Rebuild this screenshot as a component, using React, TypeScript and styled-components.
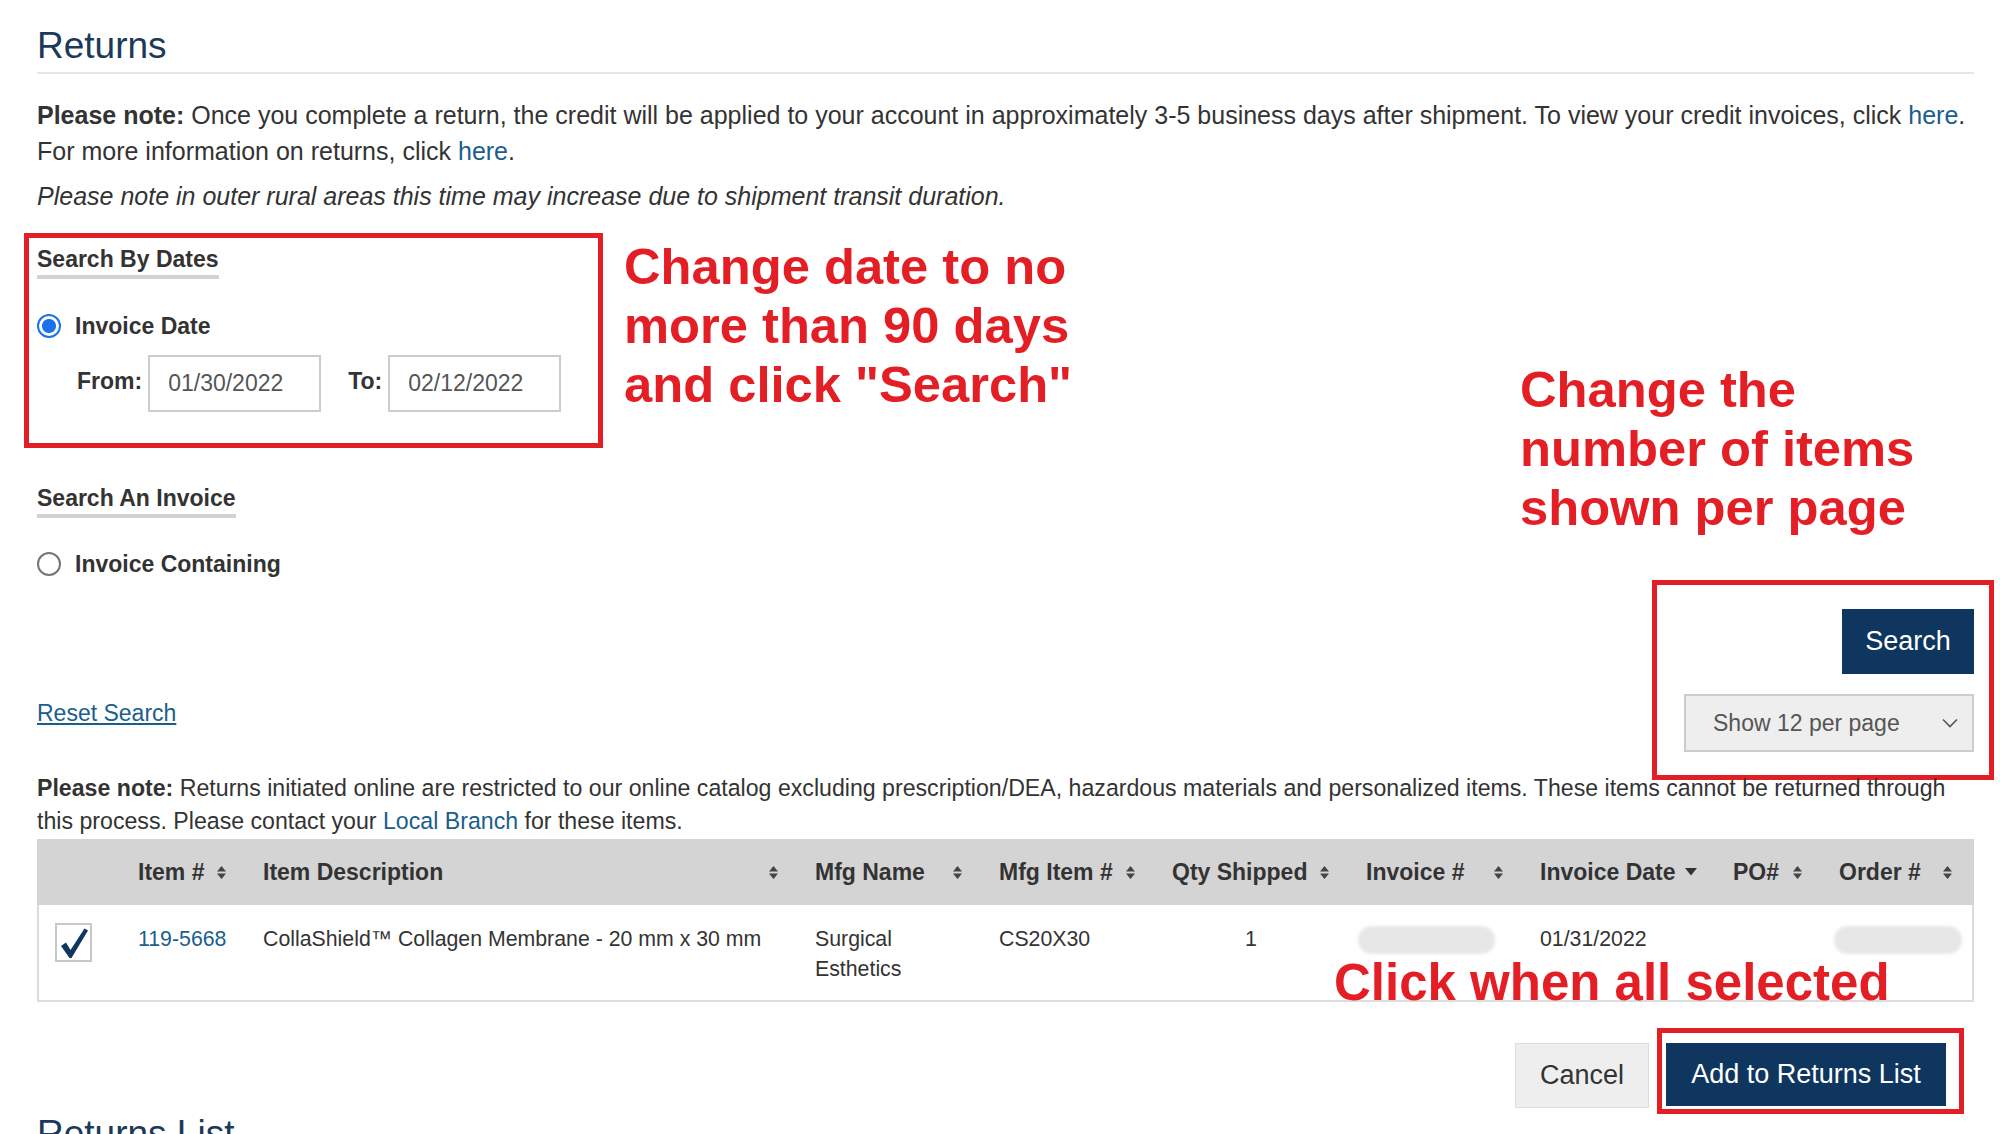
import React from 'react'
import styled, { createGlobalStyle } from 'styled-components'

const GlobalStyle = createGlobalStyle`
  html, body {
    margin: 0;
    padding: 0;
    background: #ffffff;
  }
  body {
    font-family: 'Liberation Sans', Arial, sans-serif;
    color: #333333;
    overflow: hidden;
  }
`

const NAVY = '#0f365f'
const RED = '#e31e25'
const LINK = '#1b5e8c'

const Page = styled.main`
  width: 2000px;
  height: 1134px;
  box-sizing: border-box;
  padding: 26px 26px 0 37px;
  overflow: hidden;
`

const Title = styled.h1`
  margin: 0;
  font-size: 37px;
  line-height: 40px;
  font-weight: 400;
  color: #1b3a5a;
`

const Rule = styled.div`
  margin-top: 6px;
  height: 2px;
  background: #e6e6e6;
`

const Note = styled.p<{ $size?: number; $lh?: number; $italic?: boolean }>`
  margin: 0;
  font-size: ${p => p.$size ?? 25}px;
  line-height: ${p => p.$lh ?? 36}px;
  font-style: ${p => (p.$italic ? 'italic' : 'normal')};
  color: #333333;

  b {
    font-weight: 700;
  }
`

const Lead = styled(Note)`
  margin-top: 23px;
`

const Italic = styled(Note)`
  margin-top: 9px;
`

const A = styled.a`
  color: ${LINK};
  text-decoration: none;
`

const SearchArea = styled.section`
  margin-top: 19px;
  display: flex;
  justify-content: space-between;
  align-items: flex-start;
`

const LeftCol = styled.div`
  display: flex;
  flex-direction: column;
  align-items: flex-start;
`

const DateRow = styled.div`
  display: flex;
  align-items: flex-start;
  margin-left: -13px;
`

const RedFrame = styled.div`
  border: 5px solid ${RED};
  box-sizing: border-box;
`

const DateBox = styled(RedFrame)`
  width: 579px;
  padding: 8px 0 31px 8px;
  display: flex;
  flex-direction: column;
  align-items: flex-start;
`

const SectionHeading = styled.div<{ $top?: number }>`
  margin-top: ${p => p.$top ?? 0}px;
  display: inline-block;
  font-size: 23px;
  line-height: 26px;
  font-weight: 700;
  padding-bottom: 3px;
  border-bottom: 4px solid #d2d2d2;
`

const RadioRow = styled.label<{ $top: number }>`
  margin-top: ${p => p.$top}px;
  display: flex;
  align-items: center;
  gap: 14px;
  font-size: 23px;
  line-height: 26px;
  font-weight: 700;
`

const Radio = styled.span<{ $on?: boolean }>`
  width: 24px;
  height: 24px;
  box-sizing: border-box;
  border-radius: 50%;
  border: 2px solid ${p => (p.$on ? '#1a73e8' : '#767676')};
  background: ${p => (p.$on ? 'radial-gradient(circle, #1a73e8 0 6.5px, #ffffff 7.5px)' : '#ffffff')};
`

const DateFields = styled.div`
  margin-top: 16px;
  padding-left: 40px;
  display: flex;
  align-items: center;
  font-size: 23px;
`

const FieldLabel = styled.span<{ $gap?: number }>`
  font-weight: 700;
  margin-left: ${p => p.$gap ?? 0}px;
  margin-right: 6px;
  margin-top: -4px;
`

const DateInput = styled.div`
  width: 173px;
  height: 57px;
  box-sizing: border-box;
  border: 2px solid #cccccc;
  padding-left: 18px;
  display: flex;
  align-items: center;
  color: #555555;
  font-size: 23px;
`

const Callout = styled.div<{ $top?: number; $left?: number }>`
  margin-top: ${p => p.$top ?? 0}px;
  margin-left: ${p => p.$left ?? 0}px;
  color: ${RED};
  font-weight: 700;
  font-size: 50.7px;
  line-height: 59px;
  white-space: nowrap;
`

const ResetLink = styled.a`
  margin-top: 123px;
  color: ${LINK};
  font-size: 23px;
  line-height: 26px;
  text-decoration: underline;
`

const RightCol = styled.div`
  width: 454px;
  display: flex;
  flex-direction: column;
`

const PagerBox = styled(RedFrame)`
  align-self: flex-end;
  width: 342px;
  margin-top: 43px;
  margin-right: -20px;
  margin-bottom: -8px;
  padding: 24px 15px 23px 27px;
  display: flex;
  flex-direction: column;
  align-items: flex-end;
  gap: 20px;
`

const NavyButton = styled.button<{ $w: number; $h: number }>`
  width: ${p => p.$w}px;
  height: ${p => p.$h}px;
  border: none;
  background: ${NAVY};
  color: #ffffff;
  font-family: inherit;
  font-size: 27px;
  padding: 0;
`

const GreyButton = styled.button`
  margin-top: 15px;
  width: 134px;
  height: 65px;
  box-sizing: border-box;
  border: 1px solid #dddddd;
  background: #eeeeee;
  color: #333333;
  font-family: inherit;
  font-size: 27px;
  padding: 0;
`

const Select = styled.div`
  width: 290px;
  height: 58px;
  box-sizing: border-box;
  border: 2px solid #cccccc;
  background: #eeeeee;
  color: #555555;
  font-size: 23px;
  padding: 0 14px 0 27px;
  display: flex;
  align-items: center;
  justify-content: space-between;
`

const SmallNote = styled(Note)``

const TableWrap = styled.div`
  position: relative;
  margin-top: 1px;
`

const COLS = '101px 125px 552px 184px 173px 194px 174px 193px 106px 135px'

const HeadRow = styled.div`
  display: grid;
  grid-template-columns: ${COLS};
  height: 66px;
  background: #d4d4d4;
`

const Th = styled.div<{ $last?: boolean }>`
  display: flex;
  align-items: center;
  justify-content: space-between;
  padding-right: ${p => (p.$last ? 21 : 36)}px;
  font-size: 23px;
  font-weight: 700;
  color: #333333;
  white-space: nowrap;
`

const BodyRow = styled.div`
  display: grid;
  grid-template-columns: 99px 125px 552px 184px 173px 194px 174px 193px 106px 133px;
  min-height: 97px;
  box-sizing: border-box;
  border: 2px solid #dcdcdc;
  border-top: none;
`

const Td = styled.div<{ $center?: boolean }>`
  padding: 19px 36px 0 0;
  font-size: 21.3px;
  line-height: 30px;
  color: #333333;
  text-align: ${p => (p.$center ? 'center' : 'left')};
`

const CheckCell = styled.div`
  padding: 18px 0 0 16px;
`

const CheckBox = styled.span`
  display: flex;
  align-items: center;
  justify-content: center;
  width: 37px;
  height: 39px;
  box-sizing: border-box;
  border: 2px solid #c8c8c8;
  background: #ffffff;
`

const Blur = styled.span<{ $w: number; $shift: number }>`
  display: block;
  width: ${p => p.$w}px;
  height: 28px;
  margin: 2px 0 0 ${p => p.$shift}px;
  border-radius: 14px;
  background: #e7e7e7;
  filter: blur(1.5px);
`

const OverCallout = styled(Callout)`
  position: absolute;
  left: 1297px;
  top: 114px;
  font-size: 51px;
  line-height: 60px;
`

const Actions = styled.div`
  margin-top: 26px;
  padding-right: 10px;
  display: flex;
  justify-content: flex-end;
  align-items: flex-start;
  gap: 8px;
`

const ActionFrame = styled(RedFrame)`
  padding: 10px 13px 3px 4px;
`

const SubTitle = styled(Title)`
  margin-top: 0;
`

function SortIcon() {
  return (
    <svg width="11" height="17" viewBox="0 0 11 17">
      <path d="M1 7.5 L5.5 2 L10 7.5 Z M1 9.5 L5.5 15 L10 9.5 Z" fill="#444444" />
    </svg>
  )
}

function DownIcon() {
  return (
    <svg width="12" height="8" viewBox="0 0 12 8">
      <path d="M0 0 L12 0 L6 7.5 Z" fill="#333333" />
    </svg>
  )
}

function Chevron() {
  return (
    <svg width="16" height="10" viewBox="0 0 16 10">
      <path d="M1 1.5 L8 8.5 L15 1.5" fill="none" stroke="#555555" strokeWidth="1.6" />
    </svg>
  )
}

function Check() {
  return (
    <svg width="30" height="32" viewBox="0 0 30 32">
      <path d="M2 19 L7 15.5 L11.5 23 L25.5 1.5 L29 3.5 L12.5 31 L10.5 31 Z" fill={NAVY} />
    </svg>
  )
}

const headers: { label: string; icon: 'sort' | 'down' }[] = [
  { label: 'Item #', icon: 'sort' },
  { label: 'Item Description', icon: 'sort' },
  { label: 'Mfg Name', icon: 'sort' },
  { label: 'Mfg Item #', icon: 'sort' },
  { label: 'Qty Shipped', icon: 'sort' },
  { label: 'Invoice #', icon: 'sort' },
  { label: 'Invoice Date', icon: 'down' },
  { label: 'PO#', icon: 'sort' },
  { label: 'Order #', icon: 'sort' },
]

export default function App() {
  return (
    <>
      <GlobalStyle />
      <Page>
        <Title>Returns</Title>
        <Rule />

        <Lead>
          <b>Please note:</b> Once you complete a return, the credit will be applied to your account in
          approximately 3-5 business days after shipment. To view your credit invoices, click{' '}
          <A href="#">here</A>.
          <br />
          For more information on returns, click <A href="#">here</A>.
        </Lead>
        <Italic $italic>Please note in outer rural areas this time may increase due to shipment transit duration.</Italic>

        <SearchArea>
          <LeftCol>
            <DateRow>
              <DateBox>
                <SectionHeading>Search By Dates</SectionHeading>
                <RadioRow $top={34}>
                  <Radio $on />
                  Invoice Date
                </RadioRow>
                <DateFields>
                  <FieldLabel>From:</FieldLabel>
                  <DateInput>01/30/2022</DateInput>
                  <FieldLabel $gap={27}>To:</FieldLabel>
                  <DateInput>02/12/2022</DateInput>
                </DateFields>
              </DateBox>
              <Callout $top={4} $left={21}>
                Change date to no
                <br />
                more than 90 days
                <br />
                and click "Search"
              </Callout>
            </DateRow>

            <SectionHeading $top={37}>Search An Invoice</SectionHeading>
            <RadioRow $top={33}>
              <Radio />
              Invoice Containing
            </RadioRow>
            <ResetLink href="#">Reset Search</ResetLink>
          </LeftCol>

          <RightCol>
            <Callout $top={127}>
              Change the
              <br />
              number of items
              <br />
              shown per page
            </Callout>
            <PagerBox>
              <NavyButton type="button" $w={132} $h={65}>
                Search
              </NavyButton>
              <Select>
                Show 12 per page
                <Chevron />
              </Select>
            </PagerBox>
          </RightCol>
        </SearchArea>

        <SmallNote $size={23.15} $lh={33}>
          <b>Please note:</b> Returns initiated online are restricted to our online catalog excluding
          prescription/DEA, hazardous materials and personalized items. These items cannot be returned through
          this process. Please contact your <A href="#">Local Branch</A> for these items.
        </SmallNote>

        <TableWrap>
          <HeadRow>
            <Th />
            {headers.map((h, i) => (
              <Th key={h.label} $last={i === headers.length - 1}>
                {h.label}
                {h.icon === 'sort' ? <SortIcon /> : <DownIcon />}
              </Th>
            ))}
          </HeadRow>
          <BodyRow>
            <CheckCell>
              <CheckBox>
                <Check />
              </CheckBox>
            </CheckCell>
            <Td>
              <A href="#">119-5668</A>
            </Td>
            <Td>CollaShield™ Collagen Membrane - 20 mm x 30 mm</Td>
            <Td>Surgical Esthetics</Td>
            <Td>CS20X30</Td>
            <Td $center>1</Td>
            <Td>
              <Blur $w={137} $shift={-8} />
            </Td>
            <Td>01/31/2022</Td>
            <Td />
            <Td>
              <Blur $w={128} $shift={-5} />
            </Td>
          </BodyRow>
          <OverCallout>Click when all selected</OverCallout>
        </TableWrap>

        <Actions>
          <GreyButton type="button">Cancel</GreyButton>
          <ActionFrame>
            <NavyButton type="button" $w={280} $h={63}>
              Add to Returns List
            </NavyButton>
          </ActionFrame>
        </Actions>

        <SubTitle>Returns List</SubTitle>
      </Page>
    </>
  )
}
